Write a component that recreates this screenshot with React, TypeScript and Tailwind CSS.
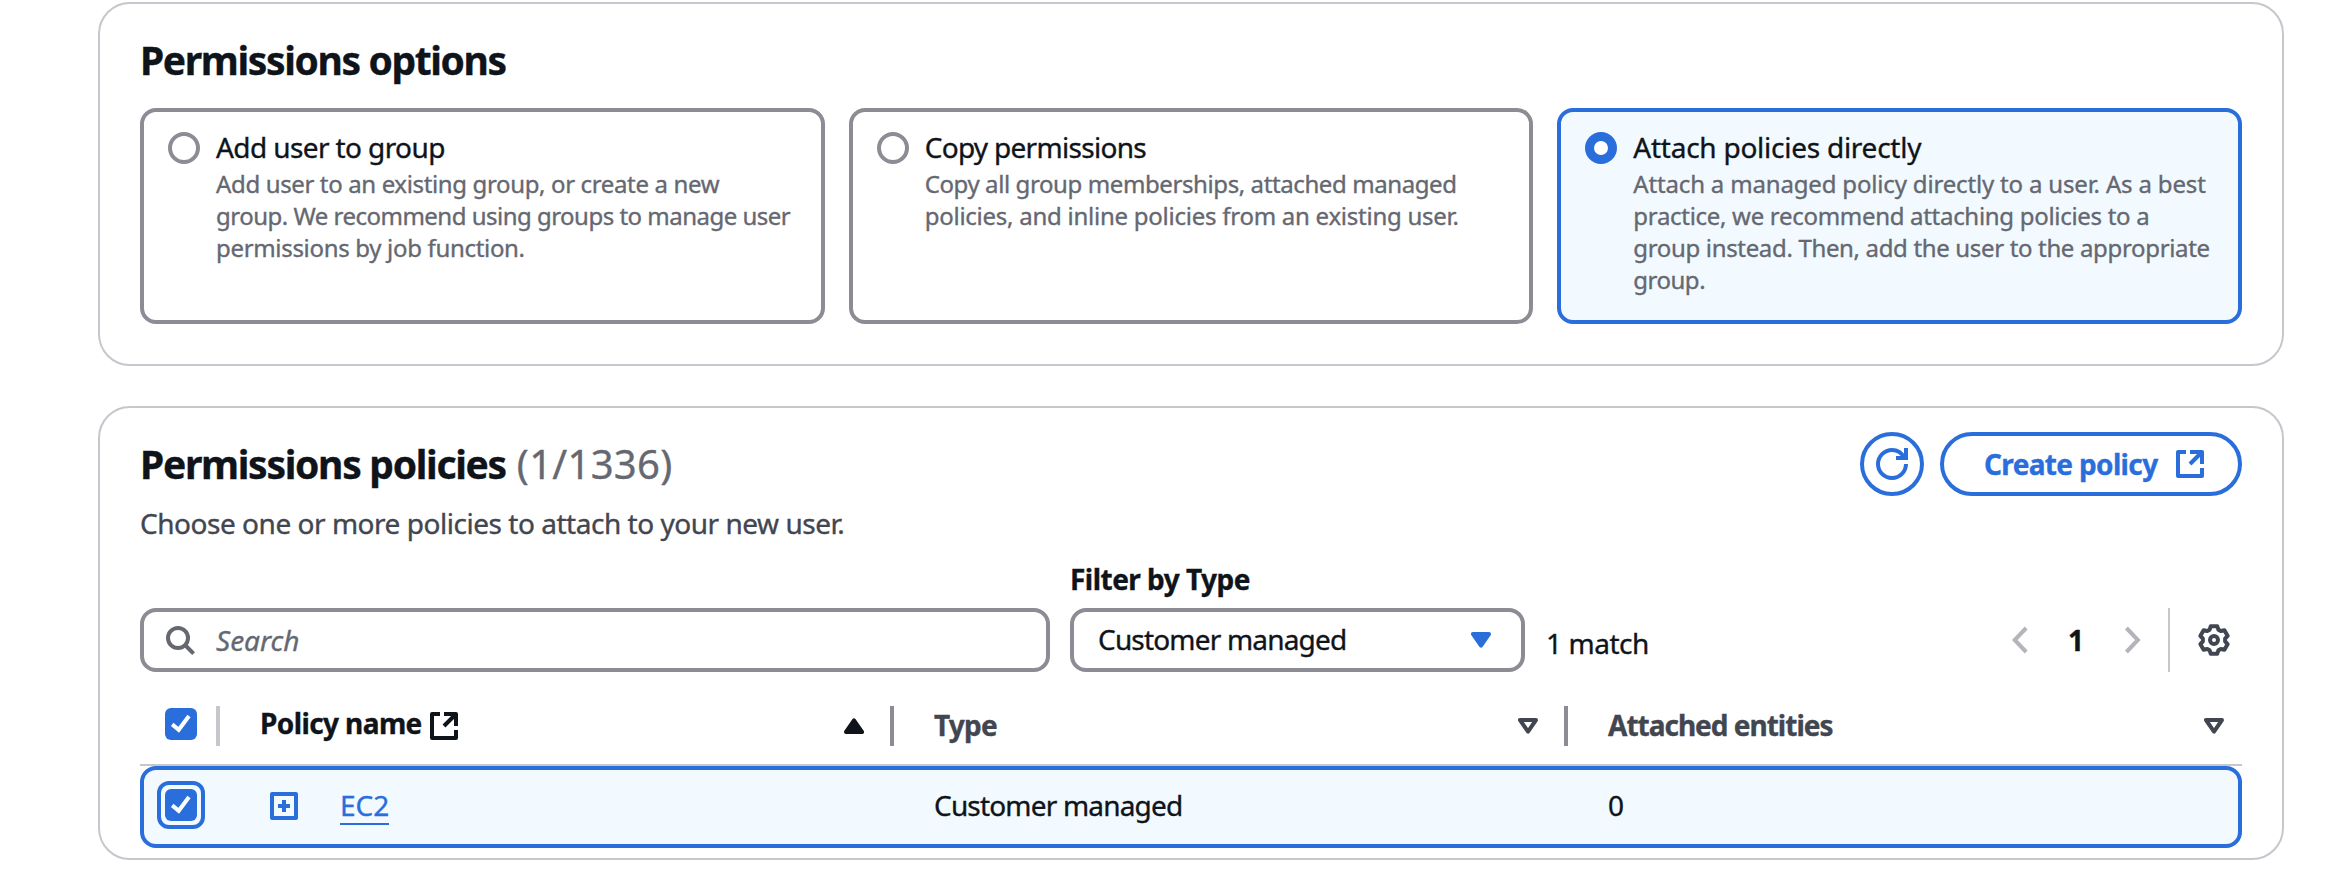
import type { ReactNode } from "react";

type Line = { text: string; tracking: string };

type Option = {
  title: string;
  titleTracking: string;
  lines: Line[];
  selected?: boolean;
};

const OPTIONS: Option[] = [
  {
    title: "Add user to group",
    titleTracking: "tracking-[-0.6px]",
    lines: [
      { text: "Add user to an existing group, or create a new", tracking: "tracking-[-0.36px]" },
      { text: "group. We recommend using groups to manage user", tracking: "tracking-[-0.51px]" },
      { text: "permissions by job function.", tracking: "tracking-[-0.32px]" },
    ],
  },
  {
    title: "Copy permissions",
    titleTracking: "tracking-[-0.7px]",
    lines: [
      { text: "Copy all group memberships, attached managed", tracking: "tracking-[-0.4px]" },
      { text: "policies, and inline policies from an existing user.", tracking: "tracking-[-0.25px]" },
    ],
  },
  {
    title: "Attach policies directly",
    titleTracking: "tracking-[-0.25px]",
    selected: true,
    lines: [
      { text: "Attach a managed policy directly to a user. As a best", tracking: "tracking-[-0.17px]" },
      { text: "practice, we recommend attaching policies to a", tracking: "tracking-[-0.3px]" },
      { text: "group instead. Then, add the user to the appropriate", tracking: "tracking-[-0.34px]" },
      { text: "group.", tracking: "tracking-[-0.5px]" },
    ],
  },
];

function Radio({ checked }: { checked?: boolean }) {
  return checked ? (
    <span className="size-8 shrink-0 rounded-full border-9 border-[#2a6edb] bg-white" />
  ) : (
    <span className="size-8 shrink-0 rounded-full border-4 border-[#8c8c94] bg-white" />
  );
}

function OptionTile({ option }: { option: Option }) {
  const frame = option.selected ? "border-[#2a6edb] bg-[#f2faff]" : "border-[#8c8c94] bg-white";
  return (
    <label className={`flex h-[216px] gap-4 rounded-2xl border-4 px-6 pt-5 ${frame}`}>
      <Radio checked={option.selected} />
      <span className="-mt-1 flex flex-col whitespace-nowrap">
        <span className={`-mt-px h-[41px] text-[28px] leading-10 text-[#0f141a] ${option.titleTracking}`}>
          {option.title}
        </span>
        {option.lines.map((line) => (
          <span key={line.text} className={`text-2xl leading-8 text-[#656871] ${line.tracking}`}>
            {line.text}
          </span>
        ))}
      </span>
    </label>
  );
}

function Checkbox() {
  return (
    <span className="flex size-8 shrink-0 rounded-md bg-[#2a6edb]">
      <svg className="size-8" viewBox="0 0 32 32" fill="none" stroke="#fff" strokeWidth="4">
        <path d="M7.2 16.4 13.7 21.8 24 8" />
      </svg>
    </span>
  );
}

function ExternalIcon() {
  return (
    <svg
      className="size-7 shrink-0"
      viewBox="0 0 28 28"
      fill="none"
      stroke="currentColor"
      strokeWidth="4"
      strokeLinejoin="round"
    >
      <path d="M10 2H2V26H26V18" />
      <path d="M14 2H26V14" />
      <path d="M26 2 14 14" />
    </svg>
  );
}

function RefreshIcon() {
  return (
    <svg className="size-8" viewBox="0 0 32 32" fill="none" stroke="currentColor" strokeWidth="4">
      <path d="M30 16A14 14 0 1 1 16 2C21.5 2 26 5.2 28.4 10" />
      <path d="M20 10H30V0" />
    </svg>
  );
}

function SearchIcon() {
  return (
    <svg className="size-8" viewBox="0 0 32 32" fill="none" stroke="#656871" strokeWidth="4">
      <circle cx="14" cy="14" r="10" />
      <path d="M20.5 20.5 29.6 29.6" />
    </svg>
  );
}

const GEAR_POINTS = [0, 60, 120, 180, 240, 300]
  .flatMap((base) =>
    [
      [-23, 11.2],
      [-13, 14.2],
      [13, 14.2],
      [23, 11.2],
    ].map(([offset, radius]) => {
      const angle = ((base + offset - 90) * Math.PI) / 180;
      return `${(16 + radius * Math.cos(angle)).toFixed(2)},${(16 + radius * Math.sin(angle)).toFixed(2)}`;
    })
  )
  .join(" ");

function GearIcon() {
  return (
    <svg className="size-8" viewBox="0 0 32 32" fill="none" stroke="#424650" strokeWidth="4" strokeLinejoin="round">
      <polygon points={GEAR_POINTS} />
      <circle cx="16" cy="16" r="4" />
    </svg>
  );
}

function Chevron({ d }: { d: string }) {
  return (
    <svg className="size-8" viewBox="0 0 32 32" fill="none" stroke="#b4b4bb" strokeWidth="4">
      <path d={d} />
    </svg>
  );
}

function SortIcon({ kind }: { kind: "ascending" | "none" | "select" }) {
  return (
    <svg className="h-4 w-5 shrink-0" viewBox="0 0 20 16" strokeWidth="4" strokeLinejoin="round">
      {kind === "ascending" && <path d="M10 2.4 18 14H2Z" fill="#0f141a" stroke="#0f141a" />}
      {kind === "none" && <path d="M2 2H18L10 13.6Z" fill="none" stroke="#424650" />}
      {kind === "select" && <path d="M2 2H18L10 13.6Z" fill="#2a6edb" stroke="#2a6edb" />}
    </svg>
  );
}

function Panel({ className, children }: { className: string; children: ReactNode }) {
  return (
    <section className={`w-[2186px] rounded-[32px] border-2 border-[#c6c6cd] bg-white px-10 ${className}`}>
      {children}
    </section>
  );
}

export default function App() {
  return (
    <main className="flex h-[892px] w-[2330px] flex-col gap-10 overflow-hidden bg-white pt-0.5 pl-[98px] font-['Noto_Sans',sans-serif] text-[28px] whitespace-nowrap text-[#0f141a] [-webkit-text-stroke:0.35px]">
      <Panel className="h-[364px]">
        <h2 className="pt-8 text-[39px] leading-[48px] font-bold tracking-[-1.37px]">Permissions options</h2>
        <div className="mt-6 grid grid-cols-3 gap-6">
          {OPTIONS.map((option) => (
            <OptionTile key={option.title} option={option} />
          ))}
        </div>
      </Panel>

      <Panel className="h-[454px]">
        <div className="flex h-[88px] items-center justify-between pt-6">
          <h2 className="flex gap-[11px] text-[39px] leading-[48px] font-bold tracking-[-1.3px]">
            Permissions policies
            <span className="text-[40px] font-normal tracking-[0.3px] text-[#656871]">(1/1336)</span>
          </h2>
          <div className="flex gap-4 text-[#2a6edb]">
            <button className="flex size-16 items-center justify-center rounded-full border-4 border-[#2a6edb]">
              <RefreshIcon />
            </button>
            <button className="flex h-16 w-[302px] items-center justify-between rounded-full border-4 border-[#2a6edb] pr-[34px] pl-10 font-bold">
              <span className="tracking-[-0.65px]">Create policy</span>
              <ExternalIcon />
            </button>
          </div>
        </div>
        <p className="mt-[7px] leading-10 tracking-[-0.47px] text-[#424650]">
          Choose one or more policies to attach to your new user.
        </p>

        <div className="mt-4 flex h-[113px] items-end">
          <div className="flex h-16 w-[910px] items-center gap-5 rounded-2xl border-4 border-[#8c8c94] pl-5">
            <SearchIcon />
            <span className="text-[#656871] italic">Search</span>
          </div>
          <div className="ml-5 flex w-[455px] flex-col gap-[9px]">
            <span className="leading-10 font-bold tracking-[-0.52px]">Filter by Type</span>
            <div className="flex h-16 items-center justify-between rounded-2xl border-4 border-[#8c8c94] pr-[30px] pl-6">
              <span className="-mt-0.5 tracking-[-0.82px]">Customer managed</span>
              <SortIcon kind="select" />
            </div>
          </div>
          <span className="ml-[21px] h-16 pt-[6px] leading-[58px] tracking-[-0.45px]">1 match</span>
          <div className="ml-auto flex h-16 items-center">
            <Chevron d="M22.2 4 10.7 16 22.2 28" />
            <span className="w-20 text-center font-bold">1</span>
            <Chevron d="M10.4 4 21.9 16 10.4 28" />
            <span className="ml-5 h-16 w-0.5 bg-[#c6c6cd]" />
            <span className="mr-3 ml-7">
              <GearIcon />
            </span>
          </div>
        </div>

        <div className="grid h-[94px] grid-cols-[80px_674px_674px_674px] border-b-2 border-[#c6c6cd] pt-[34px] font-bold">
          <div className="flex h-10 justify-between pt-0.5 pl-[25px]">
            <Checkbox />
            <span className="-mt-0.5 h-10 w-1 bg-[#c6c6cd]" />
          </div>
          <div className="flex h-10 items-center pl-10">
            <span className="-mt-1.5 mr-2 tracking-[-0.6px]">Policy name</span>
            <ExternalIcon />
            <span className="ml-auto">
              <SortIcon kind="ascending" />
            </span>
            <span className="ml-[26px] h-10 w-1 bg-[#8c8c94]" />
          </div>
          <div className="flex h-10 items-center pl-10 text-[#424650]">
            <span className="-mt-0.5 tracking-[-0.75px]">Type</span>
            <span className="ml-auto">
              <SortIcon kind="none" />
            </span>
            <span className="ml-[26px] h-10 w-1 bg-[#8c8c94]" />
          </div>
          <div className="flex h-10 items-center pr-[18px] pl-10 text-[#424650]">
            <span className="-mt-0.5 tracking-[-1px]">Attached entities</span>
            <span className="ml-auto">
              <SortIcon kind="none" />
            </span>
          </div>
        </div>

        <div className="grid h-[82px] grid-cols-[76px_674px_674px_670px] items-center rounded-2xl border-4 border-[#2a6edb] bg-[#f2faff]">
          <div className="-mt-1 pl-[13px]">
            <span className="flex size-12 items-center justify-center rounded-xl border-4 border-[#2a6edb] bg-[#f2faff]">
              <Checkbox />
            </span>
          </div>
          <div className="flex items-center pl-[50px]">
            <svg className="-mt-0.5 size-7 text-[#2a6edb]" viewBox="0 0 28 28" fill="none" stroke="currentColor" strokeWidth="4">
              <path d="M2 2H26V26H2Z" strokeLinejoin="round" />
              <path d="M8 14H20M14 8V20" />
            </svg>
            <a className="-mt-0.5 ml-[42px] h-[38px] border-b-2 border-[#2a6edb] leading-9 text-[#2a6edb]">EC2</a>
          </div>
          <div className="-mt-1 pl-10 tracking-[-0.82px]">Customer managed</div>
          <div className="-mt-1 pl-10">0</div>
        </div>
      </Panel>
    </main>
  );
}
